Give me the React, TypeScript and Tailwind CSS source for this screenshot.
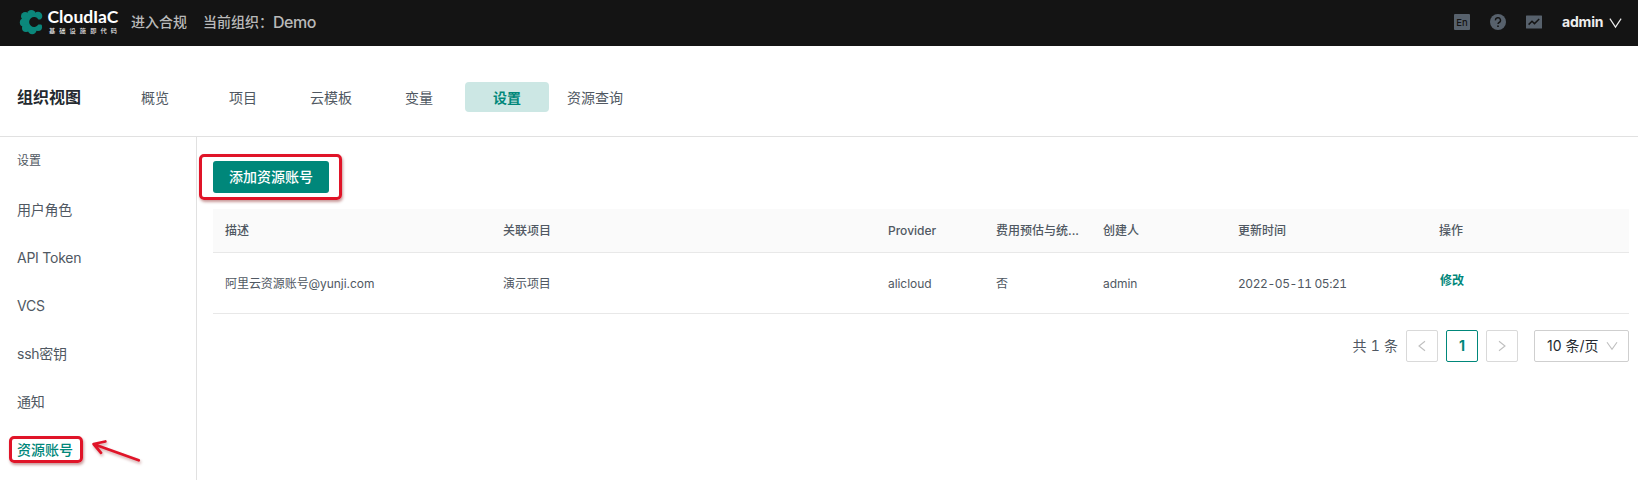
import React from "react";

const TABS = ["概览", "项目", "云模板", "变量", "设置", "资源查询"];
const MENU = ["用户角色", "API Token", "VCS", "ssh密钥", "通知", "资源账号"];
const HEADERS = ["描述", "关联项目", "Provider", "费用预估与统计", "创建人", "更新时间", "操作"];
const ROW = ["阿里云资源账号@yunji.com", "演示项目", "alicloud", "否", "admin", "2022-05-11 05:21"];
const GRID = "grid grid-cols-[278px_385px_108px_107px_135px_201px_202px]";

function Logo() {
  return (
    <svg className="block h-[46px] w-[101px]" viewBox="0 0 101 46">
      <g fill="#0b877b">
        <circle cx="12.4" cy="22" r="9.6" />
        <circle cx="12.4" cy="14.4" r="4.4" />
        <circle cx="6.2" cy="16.2" r="4.2" />
        <circle cx="4.8" cy="22.6" r="4" />
        <circle cx="7" cy="28" r="4" />
        <circle cx="13.2" cy="29.8" r="4.4" />
        <circle cx="19" cy="27" r="4.1" />
        <circle cx="19" cy="16" r="4.3" />
      </g>
      <path d="M24 19.4 H19.4 A5 5 0 1 0 19.4 24.6 H24 Z" fill="#141414" />
      <text x="28.4" y="23" fill="#fff" fontSize="17" fontWeight="700" fontFamily="Lato, sans-serif" textLength="71" lengthAdjust="spacingAndGlyphs">CloudIaC</text>
      <text x="30" y="33" fill="#e4e4e4" fontSize="6.2" fontWeight="500" fontFamily="'Noto Sans CJK SC', sans-serif" letterSpacing="4.1">基础设施即代码</text>
    </svg>
  );
}

function Chevron({ className, points }: { className: string; points: string }) {
  return (
    <svg className={className} viewBox="0 0 12 12" fill="none" stroke="currentColor" strokeWidth="1.1">
      <polyline points={points} />
    </svg>
  );
}

export default function App() {
  return (
    <div className="flex h-[480px] w-[1638px] flex-col overflow-hidden bg-white font-['Inter','Noto_Sans_CJK_SC',sans-serif] text-sm text-[#505862]">
      <header className="flex h-[46px] shrink-0 items-center bg-[#141414] pb-[3px] pl-[19px] pr-[16px] text-[#b9b9b9]">
        <div className="-mb-[3px]"><Logo /></div>
        <span className="ml-[11px] font-medium">进入合规</span>
        <span className="ml-4 font-medium">当前组织：</span>
        <span className="text-base font-medium leading-none tracking-[-0.45px]">Demo</span>
        <div className="ml-auto flex items-center">
          <svg className="h-4 w-4" viewBox="0 0 16 16">
            <rect width="16" height="16" rx="1" fill="#57616c" />
            <text x="8" y="11.6" textAnchor="middle" fontFamily="Inter, sans-serif" fontSize="9.5" fontWeight="500" fill="#141414">En</text>
          </svg>
          <svg className="ml-5 h-4 w-4" viewBox="0 0 16 16">
            <circle cx="8" cy="8" r="8" fill="#57616c" />
            <path d="M5.5 6.4a2.5 2.5 0 1 1 3.6 2.1C8.3 8.9 8 9.3 8 10.1" fill="none" stroke="#141414" strokeWidth="1.4" />
            <circle cx="8" cy="12.2" r="0.9" fill="#141414" />
          </svg>
          <svg className="ml-5 h-4 w-4" viewBox="0 0 16 16">
            <rect y="1.5" width="16" height="13" rx="0.5" fill="#57616c" />
            <path d="M2.6 10.6 6 7.2 8.5 9.6 13.2 5" fill="none" stroke="#141414" strokeWidth="1.5" />
          </svg>
          <span className="ml-5 w-[43px] whitespace-nowrap font-bold tracking-[-0.2px] text-[#ededed]">admin</span>
          <Chevron className="ml-1 mt-[3px] h-[13px] w-[13px] text-[#ededed]" points="0.8,1.5 6,9.3 11.2,1.5" />
        </div>
      </header>

      <nav className="flex h-[91px] shrink-0 items-start border-b border-[#e1e1e1] pl-[17px] pt-9">
        <div className="w-24 text-base font-bold leading-[30px] text-[#24292f]">组织视图</div>
        <div className="flex gap-1">
          {TABS.map((t) => (
            <div
              key={t}
              className={
                t === "设置"
                  ? "h-[30px] w-[84px] rounded bg-[#cce7e4] text-center font-bold leading-[31px] text-[#00877a]"
                  : "h-[30px] w-[84px] text-center leading-[31px]"
              }
            >
              {t}
            </div>
          ))}
        </div>
      </nav>

      <div className="flex min-h-0 flex-1">
        <aside className="w-[197px] shrink-0 border-r border-[#e1e1e1]">
          <div className="h-[49px] pl-[17px] text-xs leading-[47px]">设置</div>
          {MENU.map((m) => (
            <div
              key={m}
              className={
                m === "资源账号"
                  ? "relative h-12 pl-[17px] font-medium leading-[47px] text-[#00877a]"
                  : "h-12 pl-[17px] leading-[47px] tracking-[-0.25px]"
              }
            >
              {m}
              {m === "资源账号" && (
                <>
                  <div className="absolute left-[9px] top-[10px] h-[27px] w-[74px] rounded-[5px] border-[3px] border-[#e01428] shadow-[1px_2px_3px_rgba(120,0,0,0.4)]" />
                  <svg className="absolute left-[86px] top-[18px] h-[34px] w-[60px] overflow-visible drop-shadow-[1px_2px_1.5px_rgba(120,0,0,0.35)]" viewBox="0 0 60 34" fill="none" stroke="#e01428" strokeWidth="2.8" strokeLinecap="round" strokeLinejoin="round">
                    <path d="M52.7 16.2 8 .3M19.3-2.5 7.6 0 15 8.8" />
                  </svg>
                </>
              )}
            </div>
          ))}
        </aside>

        <main className="flex min-w-0 flex-1 flex-col pl-4 pr-[9px] pt-6">
          <div className="relative flex">
            <button className="h-8 w-[116px] rounded-[3px] bg-[#00877a] font-medium text-white">添加资源账号</button>
            <div className="absolute left-[-14px] top-[-7px] h-[46px] w-[143px] rounded-[5px] border-[3px] border-[#e01428] shadow-[1px_2px_3px_rgba(120,0,0,0.4)]" />
          </div>

          <div className="mt-4 text-xs">
            <div className={`${GRID} h-11 border-b border-[#e8e8e8] bg-[#fafafa] font-medium leading-[43px]`}>
              {HEADERS.map((h) => (
                <div key={h} className="truncate px-3">{h === "费用预估与统计" ? "费用预估与统..." : h}</div>
              ))}
            </div>
            <div className={`${GRID} h-[61px] border-b border-[#e8e8e8] leading-[61px]`}>
              {ROW.map((c) => (
                <div
                  key={c}
                  className={c.startsWith("2022") ? "truncate px-3 tabular-nums tracking-[-0.42px]" : "truncate px-3 tracking-[-0.06px]"}
                >
                  {c}
                </div>
              ))}
              <div className="px-[13px] font-bold leading-[55px] text-[#00877a]">修改</div>
            </div>
          </div>

          <div className="mt-4 flex items-center justify-end">
            <span className="mr-2 whitespace-pre tabular-nums [word-spacing:0.5px]">共 1 条</span>
            <div className="flex h-8 w-8 items-center justify-center rounded-[2px] border border-[#d9d9d9] text-[#bfbfbf]">
              <Chevron className="h-3 w-3" points="9,1.2 3,6 9,10.8" />
            </div>
            <div className="ml-2 flex h-8 w-8 items-center justify-center rounded-[2px] border border-[#00877a] font-bold text-[#00877a]">1</div>
            <div className="ml-2 flex h-8 w-8 items-center justify-center rounded-[2px] border border-[#d9d9d9] text-[#bfbfbf]">
              <Chevron className="h-3 w-3" points="3,1.2 9,6 3,10.8" />
            </div>
            <div className="ml-4 flex h-8 w-[95px] items-center justify-between rounded-[2px] border border-[#cfcfcf] pl-3 pr-[10px] text-[#24292f]">
              <span className="whitespace-nowrap">10 条/页</span>
              <Chevron className="h-3 w-3 text-[#bfbfbf]" points="1,2.2 6,9.3 11,2.2" />
            </div>
          </div>
        </main>
      </div>
    </div>
  );
}
